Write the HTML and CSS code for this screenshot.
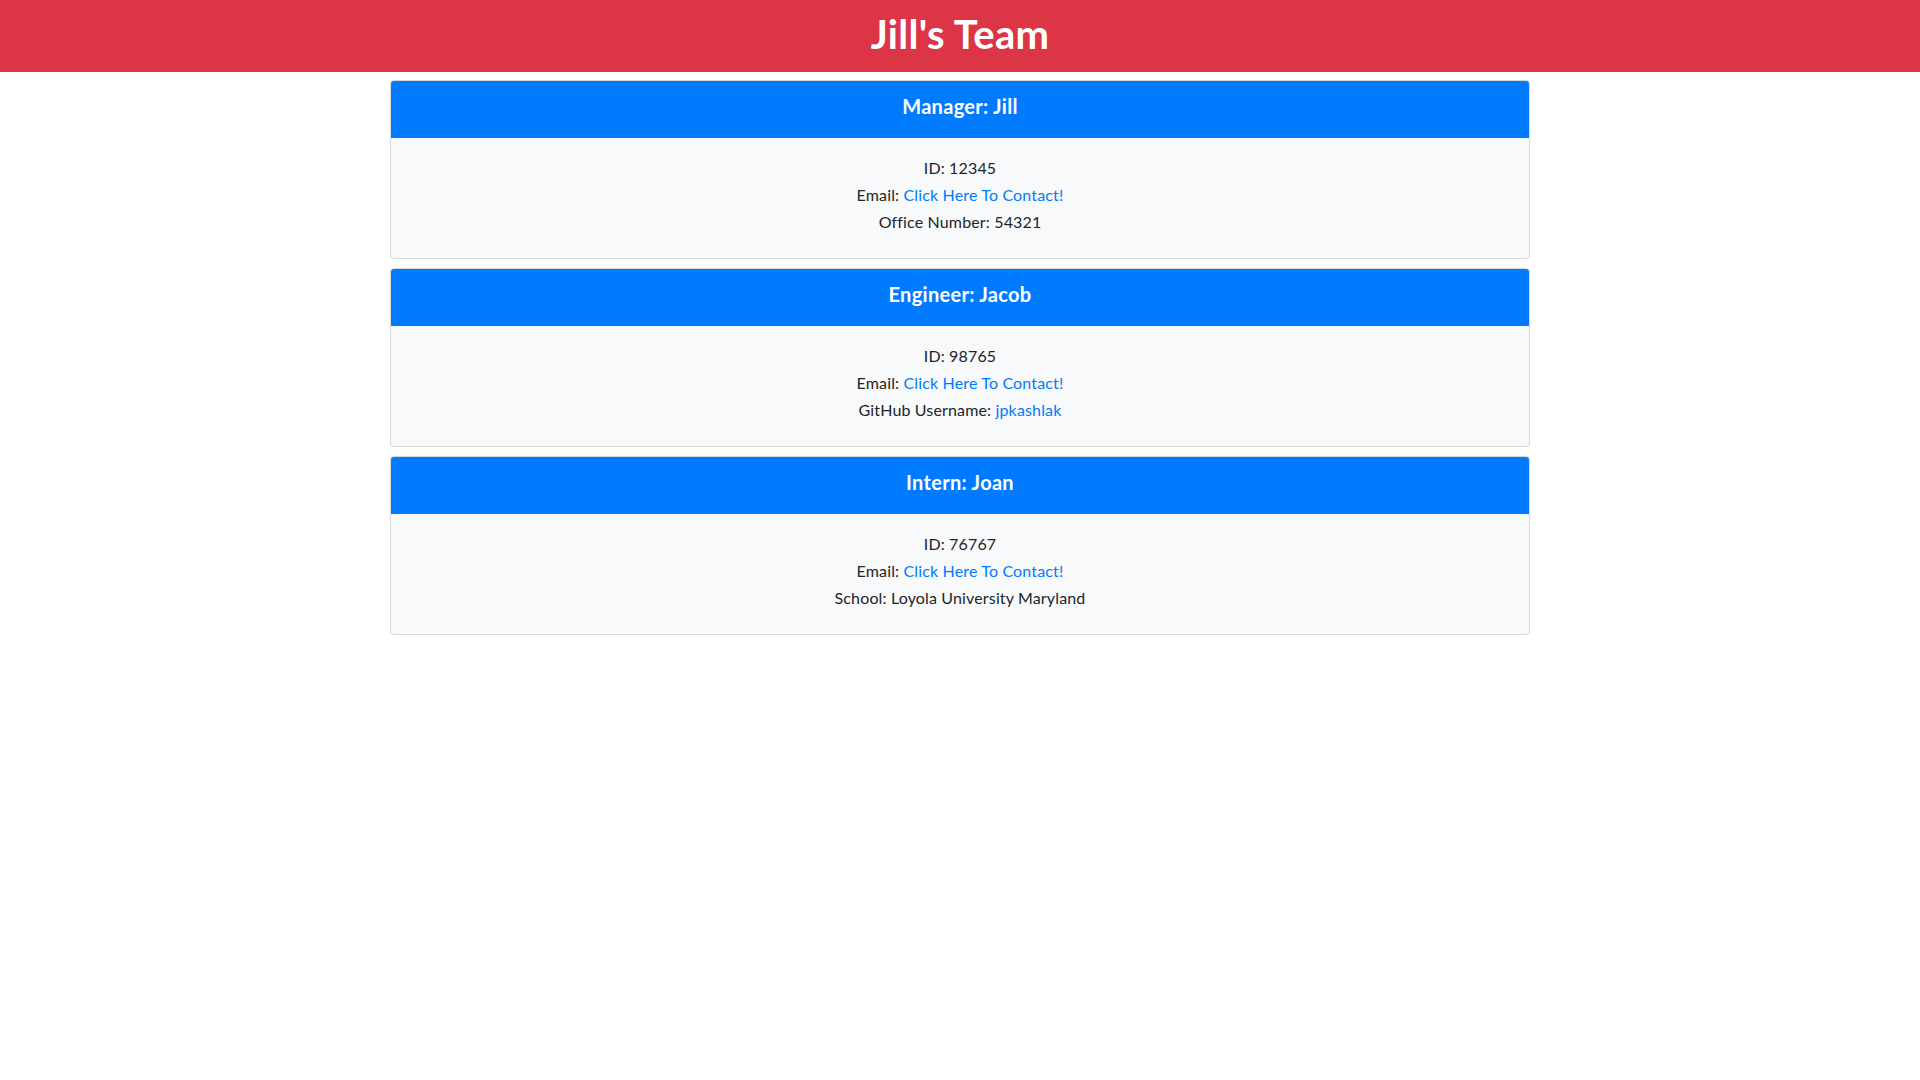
FILE: index.html
```html
<!DOCTYPE html>
<html lang="en">
<head>
<meta charset="utf-8">
<title>Jill's Team</title>
<link rel="stylesheet" href="styles.css">
</head>
<body>
<header class="banner">
  <h1 class="banner-title">Jill's Team</h1>
</header>
<main class="container">
  <section class="card">
    <div class="card-header"><h5 class="card-title">Manager: Jill</h5></div>
    <div class="card-body">
      <p class="row">ID: 12345</p>
      <p class="row">Email: <a href="#">Click Here To Contact!</a></p>
      <p class="row">Office Number: 54321</p>
    </div>
  </section>
  <section class="card">
    <div class="card-header"><h5 class="card-title">Engineer: Jacob</h5></div>
    <div class="card-body">
      <p class="row">ID: 98765</p>
      <p class="row">Email: <a href="#">Click Here To Contact!</a></p>
      <p class="row">GitHub Username: <a href="#">jpkashlak</a></p>
    </div>
  </section>
  <section class="card">
    <div class="card-header"><h5 class="card-title">Intern: Joan</h5></div>
    <div class="card-body">
      <p class="row">ID: 76767</p>
      <p class="row">Email: <a href="#">Click Here To Contact!</a></p>
      <p class="row">School: Loyola University Maryland</p>
    </div>
  </section>
</main>
</body>
</html>
```
FILE: styles.css
```css
* { box-sizing: border-box; }
html, body { margin: 0; padding: 0; }
body {
  font-family: Lato, "Liberation Sans", sans-serif;
  font-size: 16px;
  line-height: 1.5;
  color: #212529;
  background: #fff;
}
.banner {
  background: #dc3545;
  padding: 10px 0 14px;
  text-align: center;
}
.banner-title {
  margin: 0;
  color: #fff;
  font-size: 40px;
  line-height: 48px;
  font-weight: 700;
  letter-spacing: 0.3px;
}
.container {
  width: 1140px;
  margin: 8px auto 0;
  display: flex;
  flex-direction: column;
  gap: 9px;
}
.card {
  border: 1px solid rgba(0,0,0,.125);
  border-radius: 4px;
  overflow: hidden;
  background: #f8f9fa;
}
.card-header {
  background: #007bff;
  padding: 13px 20px 11px;
  text-align: center;
  height: 57px;
}
.card-title {
  margin: 0 0 8px;
  color: #fff;
  font-size: 20px;
  line-height: 24px;
  font-weight: 700;
  letter-spacing: 0.3px;
}
.card-body {
  padding: 18px 20px 24px;
  text-align: center;
  display: flex;
  flex-direction: column;
  gap: 3px;
}
.row { margin: 0; line-height: 24px; letter-spacing: 0.15px; }
.row a { color: #007bff; text-decoration: none; }
```
